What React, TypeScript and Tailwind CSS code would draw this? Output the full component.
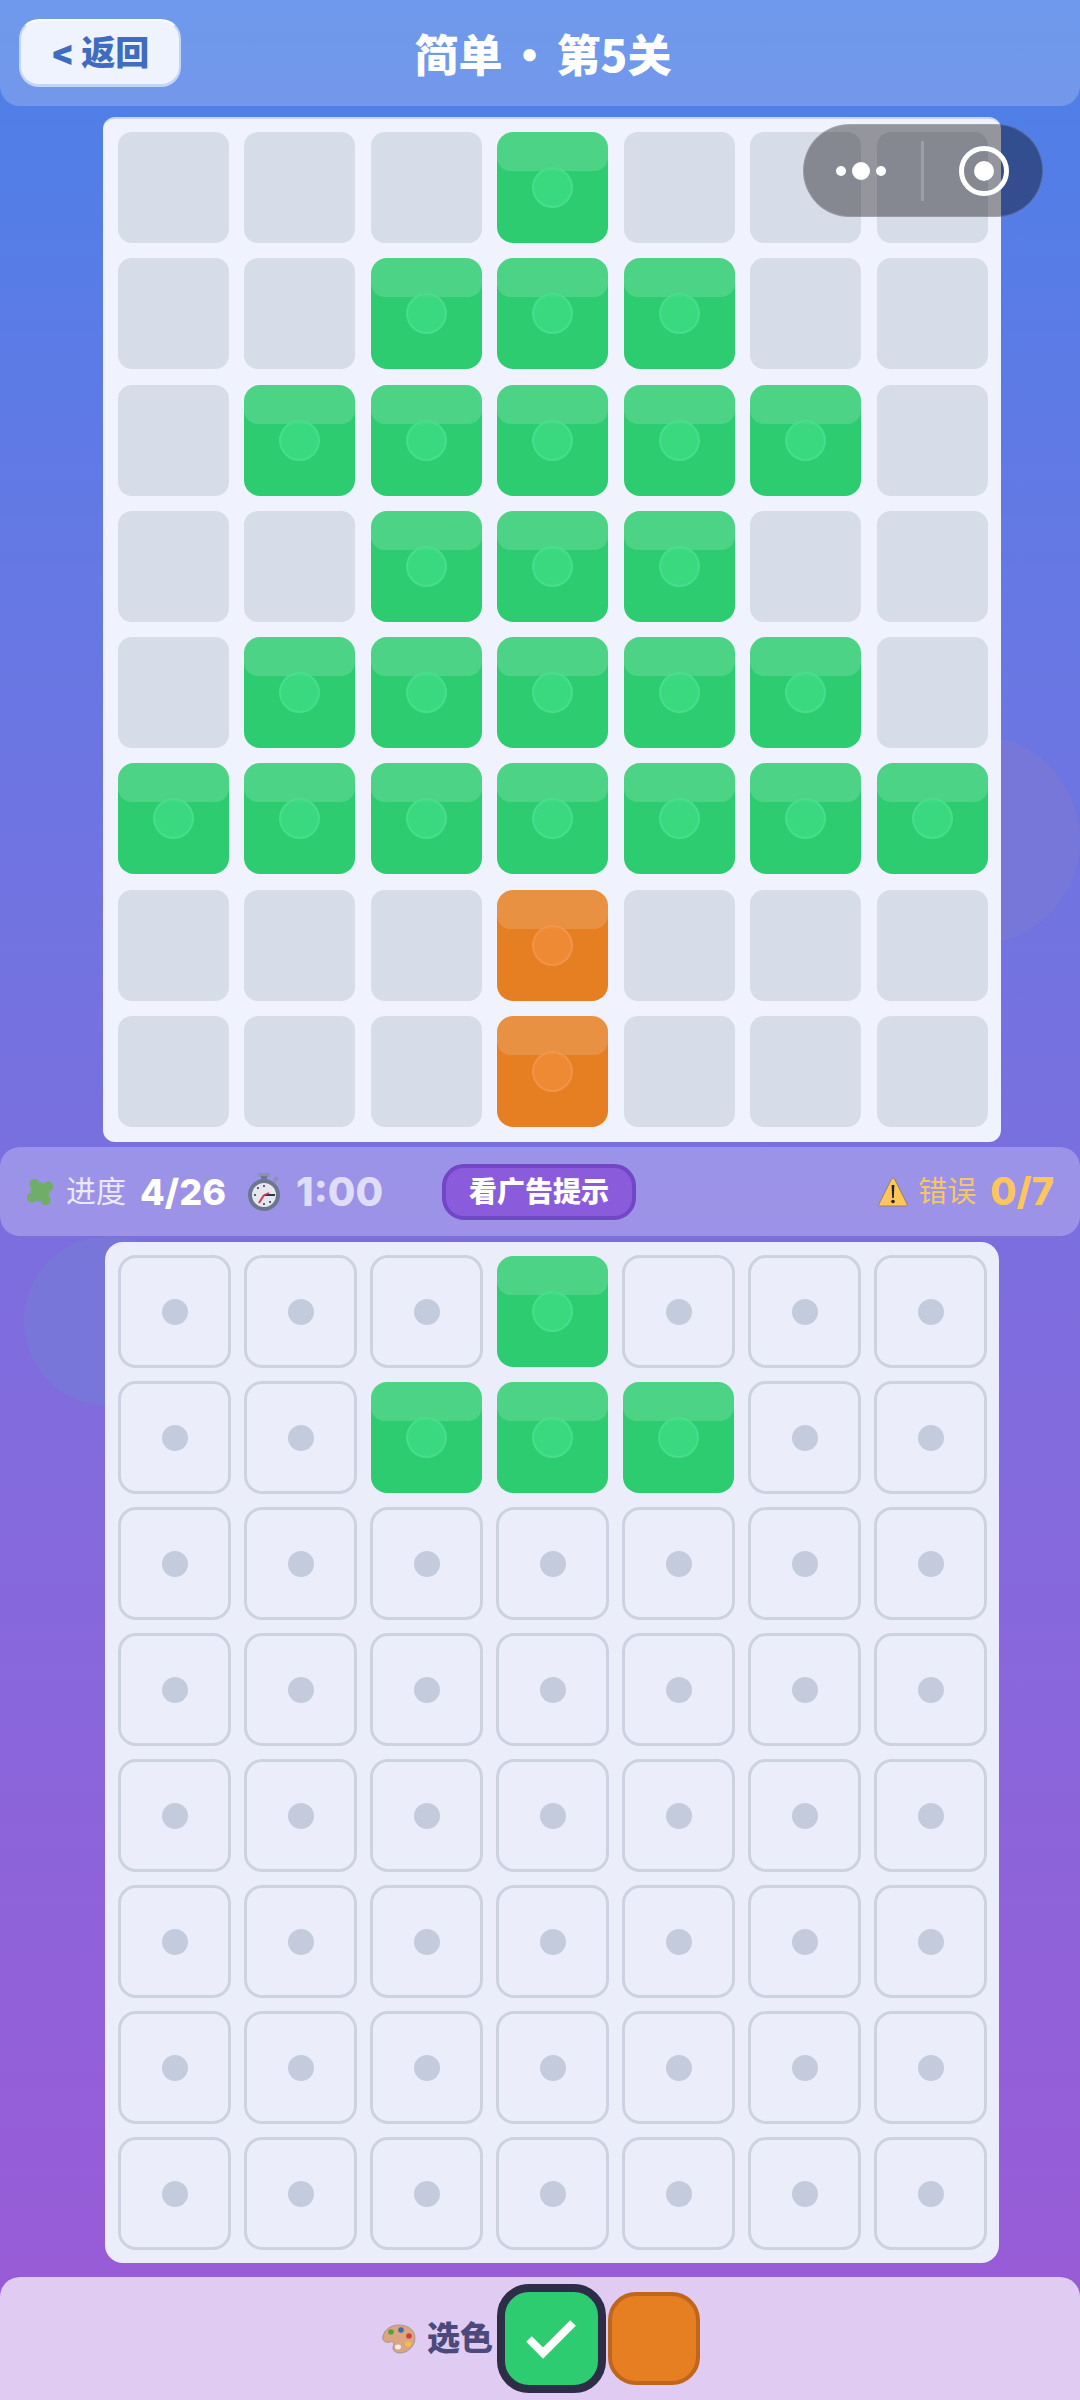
const FONT = "font-['Inter','Noto_Sans_CJK_SC',sans-serif]";

const top = [
  "0001000",
  "0011100",
  "0111110",
  "0011100",
  "0111110",
  "1111111",
  "0002000",
  "0002000",
];

const bottom = [
  "0001000",
  "0011100",
  "0000000",
  "0000000",
  "0000000",
  "0000000",
  "0000000",
  "0000000",
];

function Block({ color }: { color: "green" | "orange" }) {
  const bg = color === "green" ? "bg-[#2ecc71]" : "bg-[#e67e22]";
  const knob = color === "green" ? "bg-[#3ddc84]/80 border-[#4fe090]/70" : "bg-[#f08c3a]/80 border-[#f49a50]/70";
  return (
    <div className={`relative h-[111px] w-[111px] overflow-hidden rounded-[16px] ${bg}`}>
      <div className="absolute inset-x-0 top-0 h-[39px] rounded-b-[14px] bg-white/15" />
      <div className={`absolute left-[35px] top-[35px] h-[41px] w-[41px] rounded-full border-2 ${knob}`} />
    </div>
  );
}

function EmptySlot() {
  return (
    <div className="flex h-[113px] w-[113px] items-center justify-center rounded-[18px] border-[3px] border-[#cdd2e1] bg-[#ebeefa]">
      <div className="h-[26px] w-[26px] rounded-full bg-[#c3cbdc]" />
    </div>
  );
}

function PuzzleIcon() {
  return (
    <svg width="32" height="32" viewBox="2 2 28 28">
      <g transform="rotate(-35 16 16)" fill="#6fae66">
        <rect x="9.500" y="9.500" width="13" height="13" rx="1.500" />
        <circle cx="16" cy="7.500" r="4.500" />
        <circle cx="24.500" cy="16" r="4.500" />
        <circle cx="16" cy="24.500" r="4.500" />
        <circle cx="7.500" cy="16" r="4.500" />
      </g>
    </svg>
  );
}

function StopwatchIcon() {
  return (
    <svg width="34" height="38" viewBox="0 0 34 38">
      <rect x="11" y="0" width="12" height="4" rx="1" fill="#8a93ad" />
      <rect x="14" y="3" width="6" height="5" fill="#6d7690" />
      <rect x="27" y="4" width="4" height="5" rx="1" fill="#8a93ad" transform="rotate(40 29 6)" />
      <circle cx="17" cy="22" r="16" fill="#6d7690" />
      <circle cx="17" cy="22" r="12" fill="#e6e7ee" />
      <path d="M17 22h11" stroke="#2d3350" strokeWidth="2" />
      <path d="M17 22l-5 8" stroke="#cf3c54" strokeWidth="2" />
      <path d="M17 22l5-2" stroke="#cf3c54" strokeWidth="1.500" />
      <circle cx="17" cy="13" r="1" fill="#2d3350" />
      <circle cx="8" cy="22" r="1" fill="#2d3350" />
      <circle cx="17" cy="31" r="1" fill="#2d3350" />
      <circle cx="11" cy="15" r="1" fill="#2d3350" />
      <circle cx="23" cy="29" r="1" fill="#2d3350" />
    </svg>
  );
}

function WarningIcon() {
  return (
    <svg width="30" height="30" viewBox="0 0 30 30">
      <path d="M15 1c.8 0 1.300.6 1.600 1.200l12.500 25c.4 1-.1 1.800-1.100 1.800H2c-1 0-1.500-.8-1.100-1.800l12.500-25C13.700 1.600 14.200 1 15 1z" fill="#fdc65a" stroke="#8f7a4a" strokeWidth=".8" />
      <path d="M13.600 8h2.800l-.6 13h-1.600z" fill="#26232a" />
      <circle cx="15" cy="24.500" r="1.800" fill="#26232a" />
    </svg>
  );
}

function PaletteIcon() {
  return (
    <svg width="34" height="30" viewBox="0 0 34 30">
      <path d="M17 1c9 0 16 5 16 13 0 8-7 15-15 15-5 0-7-3-7-5 0-3 2-4 0-6-2-1-4 1-7 0C1 17 0 15 1 12 3 5 9 1 17 1z" fill="#dba581" stroke="#9e8a86" strokeWidth=".8" />
      <circle cx="9" cy="8" r="2.800" fill="#5a9e3c" />
      <circle cx="19" cy="6" r="2.800" fill="#3f6ea6" />
      <circle cx="27" cy="12" r="2.800" fill="#d83a3f" />
      <circle cx="26" cy="20" r="2.800" fill="#f2c13f" />
      <ellipse cx="16" cy="23" rx="3" ry="2.400" fill="#f3eef0" />
    </svg>
  );
}

export default function App() {
  return (
    <div className={`${FONT} relative h-[2400px] w-[1080px] overflow-hidden bg-gradient-to-b from-[#4a80e8] to-[#9b59d6]`}>
      <div className="absolute left-[870px] top-[735px] h-[210px] w-[210px] rounded-full bg-[#7878d8]/90" />
      <div className="absolute left-[24px] top-[1236px] h-[170px] w-[170px] rounded-full bg-[#7878d8]/90" />

      <div className="relative flex flex-col">
        <header className="relative flex h-[106px] items-center justify-center rounded-b-[20px] bg-white/20">
          <button className="absolute left-[19px] top-[19px] h-[68px] w-[162px] rounded-[20px] border-2 border-b-[3px] border-[#c4d6f6] border-t-white bg-[#eef3fd] text-[34px] font-black text-[#3f6cc0]">
            &lt; 返回
          </button>
          <h1 className="ml-[6px] font-['Noto_Sans_CJK_SC',sans-serif] text-[44px] font-black text-white">
            简单<span className="mx-[5px]">·</span>第5关
          </h1>
        </header>

        <div className="ml-[103px] mt-[11px] w-[898px] rounded-[12px] border-t-2 border-t-[#c9d6f4] bg-[#f0f3fd] pb-[15px] pl-[14.5px] pt-[13px]">
          <div className="grid grid-cols-[repeat(7,111px)] gap-x-[15.5px] gap-y-[15.3px]">
            {top.join("").split("").map((c, i) =>
              c === "0" ? (
                <div key={i} className="h-[111px] w-[111px] rounded-[14px] bg-[#d7dce9]" />
              ) : (
                <Block key={i} color={c === "1" ? "green" : "orange"} />
              )
            )}
          </div>
        </div>

        <div className="mt-[5px] flex h-[89px] items-center rounded-[20px] bg-white/25 pl-[24px] pr-[26px]">
          <PuzzleIcon />
          <span className="ml-[10px] text-[30px] text-white/80">进度</span>
          <span className="ml-[14px] text-[36px] font-extrabold text-white">4/26</span>
          <span className="ml-[21px]"><StopwatchIcon /></span>
          <span className="ml-[15px] text-[40px] font-extrabold text-white/70">1:00</span>
          <button className="ml-[59px] h-[56px] w-[194px] rounded-[22px] border-4 border-[#7147c6] bg-[#8a5cdc] text-[28px] font-extrabold text-white">
            看广告提示
          </button>
          <span className="ml-auto"><WarningIcon /></span>
          <span className="ml-[10px] text-[29px] text-[#f5c569]">错误</span>
          <span className="ml-[14px] text-[38px] font-extrabold text-[#fcc55d]">0/7</span>
        </div>

        <div className="ml-[105px] mt-[6px] h-[1021px] w-[894px] rounded-[18px] bg-[#ecedfa] pl-[13px] pt-[13px]">
          <div className="grid grid-cols-[repeat(7,113px)] gap-[13px]">
            {bottom.join("").split("").map((c, i) =>
              c === "0" ? (
                <EmptySlot key={i} />
              ) : (
                <div key={i} className="p-px">
                  <Block color="green" />
                </div>
              )
            )}
          </div>
        </div>

        <div className="mt-[14px] flex h-[123px] items-center rounded-t-[20px] bg-[#e0ccf2] pl-[382px]">
          <PaletteIcon />
          <span className="ml-[11px] text-[33px] font-black text-[#4c4a7c]">选色</span>
          <div className="ml-[4px] flex h-[109px] w-[109px] items-center justify-center rounded-[32px] border-[8px] border-[#2d2d47] bg-[#2ecc71]">
            <svg width="50" height="40" viewBox="0 0 50 40" fill="none" className="-ml-[2px]">
              <path d="M3 20l14 14L47 4" stroke="white" strokeWidth="8" />
            </svg>
          </div>
          <div className="ml-[2px] h-[93px] w-[92px] rounded-[28px] border-[4px] border-[#c0651c] bg-[#e67e22]" />
        </div>
      </div>

      <div className="absolute left-[803px] top-[124px] flex h-[93px] w-[240px] items-center rounded-full border border-white/15 bg-black/[.38]">
        <div className="ml-[32px] flex w-[50px] items-center justify-between">
          <span className="h-[10px] w-[10px] rounded-full bg-white" />
          <span className="h-[18px] w-[18px] rounded-full bg-white" />
          <span className="h-[10px] w-[10px] rounded-full bg-white" />
        </div>
        <div className="ml-[35px] h-[60px] w-[3px] bg-white/20" />
        <div className="ml-[35px] flex h-[50px] w-[50px] items-center justify-center rounded-full border-[5px] border-white">
          <span className="h-[20px] w-[20px] rounded-full bg-white" />
        </div>
      </div>
    </div>
  );
}
